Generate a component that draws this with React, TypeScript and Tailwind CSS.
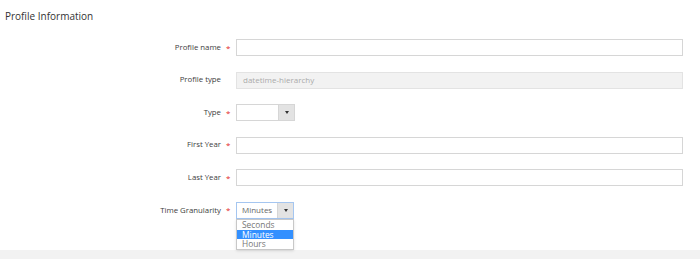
import React from "react";

const font = { fontFamily: '"Open Sans", "Noto Sans", sans-serif' };

function Label({ text, required }: { text: string; required?: boolean }) {
  return (
    <div className="flex items-center h-full">
      <div className="w-[221px] text-right text-[7.8px] text-[#3d3d3d]">{text}</div>
      <div className="w-[15px] pl-[5px] text-[8px] text-[#e22626]">{required ? "*" : ""}</div>
    </div>
  );
}

function Arrow() {
  return (
    <div className="w-0 h-0 border-l-[2.5px] border-r-[2.5px] border-t-[3px] border-l-transparent border-r-transparent border-t-[#333]" />
  );
}

function TextInput({ disabled, value }: { disabled?: boolean; value?: string }) {
  return (
    <div
      className={
        "w-[447px] h-[17px] border flex items-center px-[6px] text-[8px] " +
        (disabled ? "bg-[#f2f2f2] border-[#e3e3e3] text-[#aaa]" : "bg-white border-[#d6d6d6]")
      }
    >
      {value}
    </div>
  );
}

function Select({ width, value, focused }: { width: string; value?: string; focused?: boolean }) {
  return (
    <div
      className={
        "h-[17px] border flex " +
        width +
        (focused ? " border-[#a5c6f0]" : " border-[#d6d6d6]")
      }
    >
      <div className="flex-1 flex items-center px-[5px] text-[8px] text-[#666] bg-white">{value}</div>
      <div className="w-[16px] bg-[#e3e3e3] border-l border-[#d6d6d6] flex items-center justify-center">
        <Arrow />
      </div>
    </div>
  );
}

export default function App() {
  return (
    <div className="w-[700px] h-[259px] bg-white flex flex-col overflow-hidden" style={font}>
      <div className="pl-[5px] pt-[10px] text-[10px] leading-[12px] text-[#333]">Profile Information</div>
      <div className="flex flex-col gap-[15.6px] mt-[17px]">
        <div className="flex h-[17px]">
          <Label text="Profile name" required />
          <TextInput />
        </div>
        <div className="flex h-[17px]">
          <Label text="Profile type" />
          <TextInput disabled value="datetime-hierarchy" />
        </div>
        <div className="flex h-[17px]">
          <Label text="Type" required />
          <Select width="w-[59px]" />
        </div>
        <div className="flex h-[17px]">
          <Label text="First Year" required />
          <TextInput />
        </div>
        <div className="flex h-[17px]">
          <Label text="Last Year" required />
          <TextInput />
        </div>
        <div className="flex h-[17px]">
          <Label text="Time Granularity" required />
          <div className="relative">
            <Select width="w-[58px]" value="Minutes" focused />
            <div className="absolute left-0 top-[17px] w-[58px] bg-white border border-[#c8c8c8] shadow-sm z-10 text-[8.4px] leading-[9.6px] text-[#777]">
              <div className="px-[5px] h-[9.6px]">Seconds</div>
              <div className="px-[5px] h-[9.6px] bg-[#3390ff] text-white">Minutes</div>
              <div className="px-[5px] h-[9.6px]">Hours</div>
            </div>
          </div>
        </div>
      </div>
      <div className="flex-1" />
      <div className="h-[9px] bg-[#f2f2f2]" />
    </div>
  );
}
